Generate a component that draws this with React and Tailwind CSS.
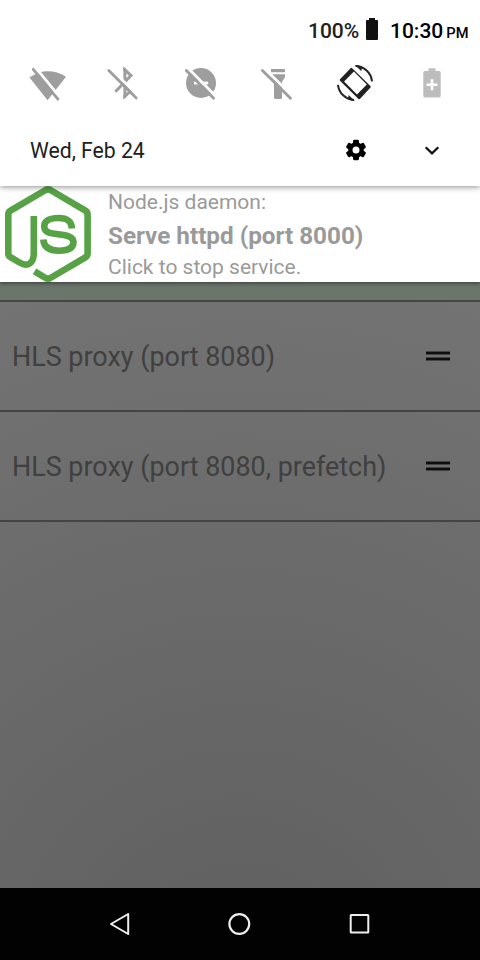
function Tile({ viewBox, children }) {
  return (
    <svg className="h-12 w-12 shrink-0" viewBox={viewBox} fill="#9e9e9e">
      {children}
    </svg>
  );
}

function Slash({ x1, y1, x2, y2 }) {
  return (
    <g fill="none">
      <path d={`M${x1 + 2.1} ${y1 - 1.9}L${x2 + 2.1} ${y2 - 1.9}`} stroke="#fff" strokeWidth="2.8" />
      <path d={`M${x1} ${y1}L${x2} ${y2}`} stroke="#9e9e9e" strokeWidth="2.8" strokeLinecap="round" />
    </g>
  );
}

function QuickTiles() {
  return (
    <div className="flex h-12 gap-[29px] pl-[23px]">
      <Tile viewBox="23 60 48 48">
        <path d="M29.5 77.5C36 73 42 71.2 48 71.2S60 72.7 66 76.7L47.6 100.3Z" />
        <Slash x1={33.3} y1={69.3} x2={57.9} y2={99.2} />
      </Tile>
      <Tile viewBox="100 60 48 48">
        <path d="M115.3 91.8L131 75.6L124.9 69.8V96.3L130.4 91.3L122.5 83.5M124.6 68v3M124.6 95v3" fill="none" stroke="#9e9e9e" strokeWidth="3" />
        <Slash x1={108.8} y1={70.6} x2={136.2} y2={98} />
      </Tile>
      <Tile viewBox="177 60 48 48">
        <circle cx="201" cy="83" r="15" />
        <path d="M194 81.6h14.2v2.8H194z" fill="#fff" />
        <Slash x1={186.3} y1={70.4} x2={213.6} y2={98.2} />
      </Tile>
      <Tile viewBox="254 60 48 48">
        <path d="M271 69h14v3.2h-14zM271 74.2h14V77l-3 5v15.5q0 1.5-1.5 1.5h-5q-1.5 0-1.5-1.5V82l-3-5z" />
        <Slash x1={262.4} y1={70.4} x2={290.5} y2={98.2} />
      </Tile>
      <Tile viewBox="331 60 48 48">
        <path d="M350.6 68.2L340 79.2Q339.2 80 340 80.8L358.5 98.9Q359.3 99.6 360.1 98.8L370.5 87.6Q371.2 86.8 370.4 86L352.2 68.2Q351.4 67.4 350.6 68.2Z" fill="#212121" />
        <path d="M353.9 71.5L366.8 84.4L357 94.4L344.1 81.5Z" fill="#fff" />
        <path d="M355.5 66A17 17 0 0 1 372 81.3M354 100A17 17 0 0 1 338 84.8" fill="none" stroke="#212121" strokeWidth="2" />
        <path d="M355 65L362 66.5L361.4 71.2ZM354.8 101L348 99.5L348.6 95Z" fill="#212121" />
      </Tile>
      <Tile viewBox="408 60 48 48">
        <path d="M428.5 68.2h7V71h3.6q1.6 0 1.6 1.6v23.3q0 1.6-1.6 1.6h-14.2q-1.6 0-1.6-1.6V72.6q0-1.6 1.6-1.6h3.6z" fill="#bdbdbd" />
        <path d="M432 79.2v11M426.5 84.7h11" fill="none" stroke="#fff" strokeWidth="2.6" />
      </Tile>
    </div>
  );
}

function Row({ label }) {
  return (
    <div className="flex h-[110px] items-center justify-between border-b-2 border-[#444] pr-[30px] pl-3">
      <span className="pt-0.5 text-[26.93px] leading-8 whitespace-nowrap text-[#404040]">{label}</span>
      <svg className="h-3 w-6" viewBox="0 0 24 12">
        <path d="M0 2h24v2H0zM0 8h24v2H0z" fill="#0d0d0d" />
        <path d="M0 1h24v4H0zM0 7h24v4H0z" fill="#0d0d0d" fillOpacity="0.45" />
      </svg>
    </div>
  );
}

export default function App() {
  return (
    <div className="flex h-[960px] w-[480px] flex-col overflow-hidden bg-black font-['Roboto',sans-serif]">
      <header className="relative z-10 h-[186px] shrink-0 bg-white shadow-[0_1px_6px_rgba(0,0,0,0.45)]">
        <div className="flex h-[60px] items-center pl-[308px] font-medium">
          <span className="w-[58px] pt-[3px] text-[21px] text-[#212121]">100%</span>
          <svg className="-mt-0.5 h-[22px] w-3 shrink-0" viewBox="0 0 12 22" fill="#111">
            <path d="M3 0h6v2h2q1 0 1 1v18q0 1-1 1H1q-1 0-1-1V3q0-1 1-1h2z" />
          </svg>
          <span className="ml-3 pt-[3px] text-[21px] whitespace-nowrap text-black">10:30<span className="ml-[3px] text-[14.67px]">PM</span></span>
        </div>
        <QuickTiles />
        <div className="flex h-[84px] items-center pl-[30px] text-[#212121]">
          <span className="w-[315px] pt-0.5 text-[21.2px]">Wed, Feb 24</span>
          <svg className="h-6 w-[22px]" viewBox="345 138 22 24">
            <g fill="#000">
              <circle cx="356" cy="150" r="7.8" />
              {[0, 60, 120].map((a) => (
                <rect key={a} x="353" y="139.8" width="6" height="20.4" rx="1.4" transform={`rotate(${a} 356 150)`} />
              ))}
            </g>
            <circle cx="356" cy="150" r="3.5" fill="#fff" />
          </svg>
          <svg className="ml-[57px] h-4 w-4" viewBox="424 142 16 16">
            <path d="M425.7 147.2L432 153.4L438.3 147.2" fill="none" stroke="#111" strokeWidth="2.2" />
          </svg>
        </div>
      </header>

      <section className="relative z-[5] flex h-24 shrink-0 bg-white text-[#9a9a9a] shadow-[0_1px_4px_rgba(0,0,0,0.5)]">
        <svg className="h-24 w-[108px] shrink-0" viewBox="0 186 108 96" fill="none" stroke="#56a245" strokeWidth="6.6">
          <path d="M33.8 216V253C33.8 263 28 267.5 19.5 262.5L10.5 257.2Q8.3 256 8.3 253.5V214.5Q8.3 212 10.5 210.7L45.6 190Q48 188.7 50.4 190L85.4 210.7Q87.6 212 87.6 214.5V253.5Q87.6 256 85.4 257.3L50.4 278Q48 279.3 45.6 278L34.5 271.3" />
          <path d="M72 228.5C71.5 221 67 218 58.5 218C49.5 218 44.2 221 44.2 226.3C44.2 232.5 50 233.5 58 234.3C68 235.3 73.5 237 73.5 242C73.5 248 68 250.7 59 250.7C49 250.7 43.8 247 43.3 239.5" />
        </svg>
        <div className="flex flex-col whitespace-nowrap">
          <span className="h-8 text-[21px] leading-[33px]">Node.js daemon:</span>
          <strong className="h-[34px] text-[24.25px] leading-9 font-bold">Serve httpd (port 8000)</strong>
          <span className="h-[30px] text-[21px] leading-[31px]">Click to stop service.</span>
        </div>
      </section>

      <main className="flex h-[606px] shrink-0 flex-col bg-[radial-gradient(circle_900px_at_240px_700px,#5f5f5f,#787878)]">
        <div className="h-5 shrink-0 border-b-2 border-[#464646] bg-[#6a756b]" />
        <Row label="HLS proxy (port 8080)" />
        <Row label="HLS proxy (port 8080, prefetch)" />
      </main>

      <nav className="flex h-[72px] shrink-0 items-center bg-[#020202] pl-[108px]">
        <svg className="h-6 w-6" viewBox="108 912 24 24" fill="none" stroke="#eee" strokeWidth="2" strokeLinejoin="round">
          <path d="M128.2 914L111 924L128.2 934Z" />
        </svg>
        <svg className="ml-[95px] h-6 w-6" viewBox="227 912 24 24" fill="none" stroke="#eee" strokeWidth="2.2">
          <circle cx="239.3" cy="924" r="9.9" />
        </svg>
        <svg className="ml-24 h-6 w-6" viewBox="347 912 24 24" fill="none" stroke="#eee" strokeWidth="2">
          <rect x="350.7" y="915" width="17.6" height="17.6" rx="0.5" />
        </svg>
      </nav>
    </div>
  );
}
